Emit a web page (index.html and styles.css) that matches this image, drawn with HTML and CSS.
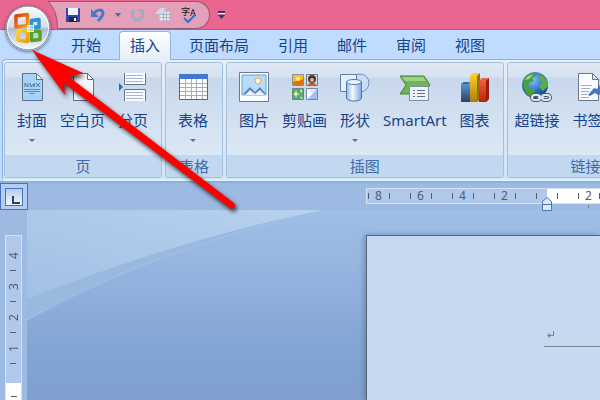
FILE: index.html
```
<!DOCTYPE html>
<html lang="zh-CN">
<head>
    <meta charset="UTF-8">
    <meta name="viewport" content="width=device-width, initial-scale=1.0">
    <title>Word - 插入</title>
    <link rel="stylesheet" href="styles.css">
</head>
<body>
    <header class="title-bar">
        <button class="office-button" aria-label="Office 按钮">
            <svg width="46" height="46" viewBox="0 0 46 46">
                <defs>
                    <linearGradient id="orb" x1="0" y1="0" x2="0" y2="1">
                        <stop offset="0" stop-color="#fafbfd"/>
                        <stop offset=".48" stop-color="#d5dbe8"/>
                        <stop offset=".52" stop-color="#aebbd2"/>
                        <stop offset="1" stop-color="#f6fcff"/>
                    </linearGradient>
                    <linearGradient id="orange" x1="0" y1="0" x2="1" y2="1">
                        <stop offset="0" stop-color="#d8400c"/>
                        <stop offset="1" stop-color="#f9a21c"/>
                    </linearGradient>
                    <linearGradient id="yellow" x1="0" y1="0" x2="1" y2="1">
                        <stop offset="0" stop-color="#fcd62c"/>
                        <stop offset="1" stop-color="#ee9a08"/>
                    </linearGradient>
                </defs>
                <circle cx="23" cy="23" r="22" fill="url(#orb)" stroke="#7c8494"/>
                <circle cx="23" cy="23" r="20.500" fill="none" stroke="#fff" stroke-opacity=".8"/>
                <g fill="none" stroke-linejoin="round" stroke-width="3.500">
                    <path d="M11 11l11.500-1.500v11L11 22z" stroke="url(#orange)"/>
                    <path d="M26.500 15.500l7.500-1v8l-7.500-1z" stroke="#2b96d2"/>
                    <path d="M13 26l9.500-.5v11L13 35z" stroke="url(#yellow)"/>
                    <path d="M26.500 26l8.500.5v8l-8.500 1z" stroke="#54a22c"/>
                </g>
                <path d="M22.500 20.500h6v6h-6z" fill="#fff" fill-opacity=".5" stroke="#fff" stroke-opacity=".8"/>
            </svg>
        </button>
        <div class="quick-access">
            <svg class="quick-cap" width="10" height="28" viewBox="0 0 10 28">
                <path d="M0 .5Q9.500 9 9.500 27.500H10V.5z" fill="#e2a0b9"/>
                <path d="M10 .5H0Q9.500 9 9.500 27.500H10" fill="none" stroke="#96566e"/>
            </svg>
            <div class="quick-tools">
                <button aria-label="保存">
                    <svg width="16" height="16" viewBox="0 0 16 16">
                        <path d="M1 1h13l1 1v13H1z" fill="#3a44a4"/>
                        <path d="M3 1h10v7H3z" fill="#eef4fc"/>
                        <path d="M4 10h8v5H4z" fill="#20264e"/>
                        <path d="M9 11h2v3H9z" fill="#fff"/>
                    </svg>
                </button>
                <button aria-label="撤消">
                    <svg width="16" height="16" viewBox="0 0 16 16">
                        <path d="M4 7C6 2 13 2 13 6c0 3-2 5-5 8" fill="none" stroke="#4a78cc" stroke-width="3"/>
                        <path d="M1 2v8h8z" fill="#4a78cc"/>
                    </svg>
                </button>
                <button aria-label="撤消选项">
                    <svg width="6" height="4" viewBox="0 0 6 4"><path d="M0 0h6L3 4z" fill="#3a6cb0"/></svg>
                </button>
                <button aria-label="重复">
                    <svg width="16" height="16" viewBox="0 0 16 16">
                        <path d="M4 3C1 6 2 13 7 13s7-5 4-9" fill="none" stroke="#a9a8c4" stroke-width="3"/>
                        <path d="M7 2h7v7z" fill="#a9a8c4"/>
                    </svg>
                </button>
                <button aria-label="插入表格">
                    <svg width="16" height="16" viewBox="0 0 16 16">
                        <path d="M4 4h11v10H4z" fill="#e8e6f0" stroke="#b0b0c8"/>
                        <path d="M4 7.500h11M4 10.500h11M8.500 4v10M11.500 4v10" stroke="#b0b0c8"/>
                        <path d="M0 7l5-6h6L7 7z" fill="#cfd6e4"/>
                    </svg>
                </button>
                <button aria-label="拼写和语法">
                    <svg width="18" height="18" viewBox="0 0 18 18">
                        <text class="icon-text" x="1" y="9">字</text>
                        <text class="icon-text" x="10" y="10">A</text>
                        <path d="M4 12l4 4 7-7" fill="none" stroke="#3a70c8" stroke-width="2"/>
                    </svg>
                </button>
            </div>
        </div>
        <button class="customize" aria-label="自定义快速访问工具栏">
            <svg width="7" height="8" viewBox="0 0 7 8">
                <path d="M0 0h7v2H0zM0 4h7L3.500 8z" fill="#26406e"/>
                <path d="M0 2h7v1H0z" fill="#fff"/>
            </svg>
        </button>
    </header>

    <nav class="tabs" role="tablist">
        <button role="tab">开始</button>
        <button role="tab" class="active" aria-selected="true">插入</button>
        <button role="tab">页面布局</button>
        <button role="tab">引用</button>
        <button role="tab">邮件</button>
        <button role="tab">审阅</button>
        <button role="tab">视图</button>
    </nav>

    <section class="ribbon">
        <div class="group">
            <div class="tools">
                <button class="tool">
                    <svg width="32" height="32" viewBox="0 0 32 32">
                        <path d="M6.500 2.500h14l6 6v21h-20z" fill="#a6d4f8" stroke="#5d708c"/>
                        <path d="M20.500 2.500v6h6z" fill="#f4faff" stroke="#5d708c"/>
                        <path d="M9 16v-4l3 4v-4M14 12l1 4 2-3 1 3 1-4M20 16l4-4M20 12l4 4" fill="none" stroke="#587a9e"/>
                        <path d="M8 18.500h16M8 20.500h16M13 22.500h6" stroke="#7b8692"/>
                    </svg>
                    <span>封面</span>
                    <i class="drop"></i>
                </button>
                <button class="tool">
                    <svg width="32" height="32" viewBox="0 0 32 32">
                        <path d="M6.500 2.500h14l6 6v21h-20z" fill="#f4f7fc" stroke="#5d6f8c"/>
                        <path d="M20.500 2.500v6h6z" fill="#fff" stroke="#5d6f8c"/>
                    </svg>
                    <span>空白页</span>
                </button>
                <button class="tool">
                    <svg width="32" height="32" viewBox="0 0 32 32">
                        <path d="M7.500 2v11.500h21V2M7.500 30V18.500h21V30" fill="#fbfcff" stroke="#66768f"/>
                        <path d="M9 4.500h17M9 7.500h17M9 10.500h17M9 21.500h17M9 24.500h17M9 27.500h17" stroke="#a5b6d2"/>
                        <path d="M2 12l4 4-4 4z" fill="#3569bd"/>
                    </svg>
                    <span>分页</span>
                </button>
            </div>
            <div class="group-name">页</div>
        </div>
        <div class="group">
            <div class="tools">
                <button class="tool">
                    <svg width="32" height="32" viewBox="0 0 32 32">
                        <path d="M2.500 3.500h28v25h-28z" fill="#fff" stroke="#586580"/>
                        <path d="M2 3h29v5H2z" fill="#4277d4"/>
                        <path d="M3 12.500h27M3 16.500h27M3 20.500h27M3 24.500h27M8.500 8v20M14.500 8v20M19.500 8v20M25.500 8v20" stroke="#a4aec2"/>
                    </svg>
                    <span>表格</span>
                    <i class="drop"></i>
                </button>
            </div>
            <div class="group-name">表格</div>
        </div>
        <div class="group">
            <div class="tools">
                <button class="tool">
                    <svg width="32" height="32" viewBox="0 0 32 32">
                        <path d="M1.500 1.500h29v29h-29z" fill="#fcfdff" stroke="#6a7b8f"/>
                        <path d="M4 4h24v20H4z" fill="#b7dcfa" stroke="#6f9fd0"/>
                        <circle cx="20" cy="10" r="3" fill="#fff4d8" stroke="#f0a25c"/>
                        <path d="M5 23l7-7 5 5 5-5 6 7z" fill="#5d80b8"/>
                        <path d="M7 24l5-5 5 4 5-4 5 5z" fill="#e6f1fc"/>
                    </svg>
                    <span>图片</span>
                </button>
                <button class="tool">
                    <svg width="32" height="32" viewBox="0 0 32 32">
                        <path d="M3.500 3.500h11v11h-11z" fill="#fbbe24" stroke="#82909e"/>
                        <path d="M4 11c4-2 7-1 10-3v6H4z" fill="#e26e0c"/>
                        <circle cx="9" cy="8" r="2" fill="#fff19a"/>
                        <path d="M17.500 3.500h11v11h-11z" fill="#dce0e4" stroke="#6f7680"/>
                        <circle cx="23" cy="8" r="4" fill="#3c3a3e"/>
                        <circle cx="23" cy="9" r="2" fill="#f3ad7c"/>
                        <path d="M19 14c0-3 8-3 8 0z" fill="#d9572c"/>
                        <path d="M3.500 17.500h11v11h-11z" fill="#57a878" stroke="#628b78"/>
                        <path d="M7 19l1 3 3 1-3 1-1 3-1-3-2-1 2-1zM12 18l1 2v2l-2-2zM11 24l1 2 2 1-2 1z" fill="#fdf3a6"/>
                        <path d="M17.500 17.500h11v11h-11z" fill="#dfe9fd" stroke="#7486a6"/>
                        <path d="M18 18l6 5-6 5z" fill="#fff"/>
                        <path d="M28 18v10h-9z" fill="#a2bcf0"/>
                    </svg>
                    <span>剪贴画</span>
                </button>
                <button class="tool">
                    <svg width="32" height="32" viewBox="0 0 32 32">
                        <defs>
                            <linearGradient id="can">
                                <stop offset="0" stop-color="#8fb7e6"/>
                                <stop offset=".4" stop-color="#f5faff"/>
                                <stop offset="1" stop-color="#7da7dc"/>
                            </linearGradient>
                        </defs>
                        <circle cx="21" cy="12" r="9" fill="#c9dff6" stroke="#6c8fbe"/>
                        <path d="M1.500 3.500h16v17h-16z" fill="#e4effb" stroke="#5f80ad"/>
                        <path d="M7.500 11v16c0 4 15 4 15 0V11z" fill="url(#can)" stroke="#5379ac"/>
                        <ellipse cx="15" cy="11" rx="7.500" ry="2.500" fill="#eaf4fe" stroke="#5379ac"/>
                    </svg>
                    <span>形状</span>
                    <i class="drop"></i>
                </button>
                <button class="tool">
                    <svg width="32" height="32" viewBox="0 0 32 32">
                        <path d="M1 5h24l6 9-6 9H1l6-9z" fill="#6fb556" stroke="#48823a"/>
                        <path d="M3 6h21l3 4H6z" fill="#9dd184"/>
                        <path d="M10.500 15.500h19v14h-19z" fill="#eef3fa" stroke="#7d8da2"/>
                        <path d="M14 19.500h2M18 19.500h8M14 22.500h2M18 22.500h8M14 25.500h2M18 25.500h8" stroke="#60738c"/>
                    </svg>
                    <span>SmartArt</span>
                </button>
                <button class="tool">
                    <svg width="32" height="32" viewBox="0 0 32 32">
                        <defs>
                            <linearGradient id="barBlue" x1="0" y1="0" x2="0" y2="1">
                                <stop offset="0" stop-color="#5b9cdd"/>
                                <stop offset="1" stop-color="#284467"/>
                            </linearGradient>
                            <linearGradient id="barGold" x1="0" y1="0" x2="0" y2="1">
                                <stop offset="0" stop-color="#fbd628"/>
                                <stop offset="1" stop-color="#b07c0a"/>
                            </linearGradient>
                            <linearGradient id="barRed" x1="0" y1="0" x2="0" y2="1">
                                <stop offset="0" stop-color="#f2654a"/>
                                <stop offset="1" stop-color="#b82404"/>
                            </linearGradient>
                        </defs>
                        <path d="M2 13l3-2h6v20H2z" fill="url(#barBlue)"/>
                        <path d="M2 13l3-2h6l-2 2z" fill="#2c6cae"/>
                        <path d="M11 5l3-3h7v26l-3 3h-7z" fill="url(#barGold)"/>
                        <path d="M18 5l3-3v26l-3 3z" fill="#93700c"/>
                        <path d="M20 10l3-3h7v21l-3 3h-7z" fill="url(#barRed)"/>
                        <path d="M27 10l3-3v21l-3 3z" fill="#98200a"/>
                    </svg>
                    <span>图表</span>
                </button>
            </div>
            <div class="group-name">插图</div>
        </div>
        <div class="group links">
            <div class="tools">
                <button class="tool">
                    <svg width="32" height="32" viewBox="0 0 32 32">
                        <defs>
                            <radialGradient id="globe" cx=".4" cy=".3" r=".7">
                                <stop offset="0" stop-color="#8fc8f6"/>
                                <stop offset=".6" stop-color="#2c72cc"/>
                                <stop offset="1" stop-color="#12458f"/>
                            </radialGradient>
                        </defs>
                        <circle cx="14" cy="14" r="13" fill="url(#globe)"/>
                        <path d="M3 8c3-5 8-6 13-6l-1 3-4 2 2 3-5 2-1 4 6 2 1 4-4 4C5 24 1 18 3 8z" fill="#4a9e3e"/>
                        <path d="M19 3c5 3 8 7 8 12l-5 5-4-4 3-5-3-3z" fill="#5cad48"/>
                        <path d="M4 9c2-4 5-5 8-5l-4 4z" fill="#a5da72"/>
                        <g fill="none" stroke="#4f5c6e" stroke-width="4">
                            <rect x="11" y="24" width="8" height="5" rx="2.500"/>
                            <rect x="21" y="24" width="8" height="5" rx="2.500"/>
                        </g>
                        <g fill="none" stroke="#dde5ee" stroke-width="2">
                            <rect x="11" y="24" width="8" height="5" rx="2.500"/>
                            <rect x="21" y="24" width="8" height="5" rx="2.500"/>
                            <path d="M17 26.500h6"/>
                        </g>
                    </svg>
                    <span>超链接</span>
                </button>
                <button class="tool">
                    <svg width="32" height="32" viewBox="0 0 32 32">
                        <path d="M6.500 2.500h14l6 6v21h-20z" fill="#fbfcff" stroke="#66758d"/>
                        <path d="M20.500 2.500v6h6z" fill="#e1e9f4" stroke="#66758d"/>
                        <path d="M9 14.500h11M9 17.500h9M9 20.500h8M9 23.500h6M9 26.500h8" stroke="#9aabc6"/>
                        <path d="M16 24l6-7 3 1 3-4 4 2v6l-6 2-3-2-5 3z" fill="#4778c6"/>
                    </svg>
                    <span>书签</span>
                </button>
            </div>
            <div class="group-name">链接</div>
        </div>
    </section>

    <main class="workspace">
        <button class="tab-selector" aria-label="左对齐式制表符"><i></i></button>
        <div class="ruler">
            <div class="ruler-margin">
                <span>8</span><span></span><span>6</span><span></span><span>4</span><span></span><span>2</span><span></span><span class="last"></span>
            </div>
            <div class="ruler-text">
                <span></span><span>2</span><span class="last"></span>
                <svg class="indent" width="10" height="15" viewBox="0 0 10 15">
                    <path d="M.5 14.500v-9L5 1.500l4.500 4v9z" fill="#dfe9f5" stroke="#4a74ae"/>
                    <path d="M0 8.500h10" stroke="#4a74ae"/>
                </svg>
                <i class="default-tab"></i>
            </div>
        </div>
        <div class="side">
            <div class="side-ruler">
                <div class="side-margin">
                    <span>4</span><span>3</span><span>2</span><span>1</span>
                </div>
                <div class="side-text"></div>
            </div>
        </div>
        <div class="canvas">
            <svg class="sweep" width="320" height="120" viewBox="0 0 320 120">
                <defs>
                    <linearGradient id="sky" x1="0" y1="1" x2="1" y2="0">
                        <stop offset="0" stop-color="#a2c0e6"/>
                        <stop offset="1" stop-color="#b8d1ee"/>
                    </linearGradient>
                </defs>
                <path d="M0 110Q130 38 295 0H0z" fill="#9ab9df"/>
                <path d="M0 110Q130 38 295 0" fill="none" stroke="#a5c1e6"/>
                <path d="M0 89Q150 30 295 0H0z" fill="url(#sky)"/>
            </svg>
            <div class="page">
                <div class="page-header">
                    <svg width="8" height="8" viewBox="0 0 8 8">
                        <path d="M6.500 0v4.500H2" fill="none" stroke="#7d838b"/>
                        <path d="M0 4.500L3 2v5z" fill="#7d838b"/>
                    </svg>
                </div>
            </div>
        </div>
    </main>

    <svg class="pointer" width="260" height="230" viewBox="0 0 260 230">
        <path d="M32 50L83 73 69 77 234 203Q237 207 231 209L64 83 65 95z" fill="#f00"/>
    </svg>
</body>
</html>
```

FILE: styles.css
```
* {
    box-sizing: border-box;
}
body {
    display: flex;
    flex-direction: column;
    min-height: 100vh;
    margin: 0;
    overflow: hidden;
    background-color: #bfdbff;
    color: #15428b;
    font-family: "Noto Sans", "Noto Sans CJK SC", sans-serif;
    font-size: 15px;
    line-height: 20px;
}
button {
    padding: 0;
    border: 1px solid transparent;
    background: none;
    color: inherit;
    font: inherit;
    white-space: nowrap;
}
svg {
    display: block;
    flex: none;
}

/* title bar */
.title-bar {
    position: relative;
    display: flex;
    align-items: center;
    height: 30px;
    padding-left: 48px;
    border-bottom: 1px solid #c0587e;
    background-color: #e8668f;
}
.office-button {
    position: absolute;
    left: 5px;
    top: 5px;
    border: none;
    border-radius: 50%;
    box-shadow: 0 1px 3px rgba(30, 40, 70, 0.6);
}
.quick-access {
    display: flex;
}
.quick-tools {
    display: flex;
    align-items: center;
    gap: 7px;
    height: 28px;
    padding: 0 10px 0 6px;
    border: 1px solid #96566e;
    border-left: none;
    border-radius: 0 14px 14px 0;
    background-color: #e2a0b9;
}
.icon-text {
    fill: #111;
    font-size: 9px;
}
.customize {
    margin-left: 7px;
}

/* tabs */
.tabs {
    display: flex;
    gap: 7px;
    height: 29px;
    padding: 1px 0 0 60px;
}
.tabs button {
    padding: 0 10px 2px;
    border-bottom: none;
    border-radius: 4px 4px 0 0;
}
.tabs .active {
    position: relative;
    height: 29px;
    border-color: #8fb5e6;
    background: linear-gradient(#fdfeff, #e6eef8);
}

/* ribbon */
.ribbon {
    display: flex;
    gap: 3px;
    height: 122px;
    margin-left: 2px;
    padding: 2px 0 1px 1px;
    overflow: hidden;
    border: 1px solid #8db2e3;
    border-right: none;
    border-bottom: 2px solid #d3f7fd;
    border-radius: 4px 0 0 4px;
    background: linear-gradient(#e6eef8, #d3e4f6);
}
.group {
    display: flex;
    flex: none;
    flex-direction: column;
    min-width: 58px;
    border: 1px solid #a3c1dd;
    border-radius: 3px;
    background: linear-gradient(#dfe8f4 0, #d6e2f1 14px, #c8d8ec 15px, #dbe8f5 92px);
}
.links {
    min-width: 158px;
}
.tools {
    display: flex;
    flex: 1;
    gap: 1px;
    padding: 7px 7px 0 6px;
}
.links .tools {
    padding-left: 1px;
}
.tool {
    display: flex;
    flex-direction: column;
    align-items: center;
    padding: 0 5px;
}
.tool svg {
    margin: 0 -1px;
}
.tool span {
    margin-top: 7px;
}
.drop {
    margin-top: 9px;
    border: 3px solid transparent;
    border-top-color: #4f75ad;
    border-bottom: none;
}
.group-name {
    height: 22px;
    border-radius: 0 0 2px 2px;
    background-color: #c1d8f0;
    color: #3e6aaa;
    line-height: 22px;
    text-align: center;
}

/* document area */
.workspace {
    display: grid;
    flex: 1;
    grid-template-columns: 27px 1fr;
    grid-template-rows: 27px 1fr;
    border-top: 2px solid #91aedb;
    background-color: #9cbae2;
    color: #555c68;
    font-size: 12px;
}
.tab-selector {
    width: 28px;
    height: 27px;
    padding: 4px;
    border-color: #4472c4;
    background-color: #b5cdee;
}
.tab-selector i {
    display: block;
    width: 18px;
    height: 18px;
    border: 1px solid #4472c4;
    background: linear-gradient(#b4ccec, #f4f8fd);
}
.tab-selector i::after {
    content: "";
    display: block;
    width: 6px;
    height: 6px;
    margin: 7px 0 0 6px;
    border: solid #29456f;
    border-width: 0 0 2px 2px;
}
.ruler {
    position: relative;
    z-index: 1;
    display: flex;
    align-self: start;
    height: 16px;
    margin: 5px 0 0 339px;
    border: 1px solid #d5e2f5;
    border-right: none;
    line-height: 14px;
}
.ruler-margin {
    display: flex;
    width: 180px;
    padding-left: 1px;
    background-color: #b0c8ea;
}
.ruler-text {
    position: relative;
    display: flex;
    flex: 1;
    padding-left: 10px;
    background-color: #fff;
}
.ruler span {
    flex: none;
    width: 21px;
    background: linear-gradient(#555c68, #555c68) left center / 1px 6px no-repeat;
    text-align: center;
}
.ruler .last {
    width: 1px;
}
.indent {
    position: absolute;
    left: -5px;
    top: 7px;
}
.default-tab {
    position: absolute;
    left: 41px;
    top: 16px;
    width: 1px;
    height: 3px;
    background-color: #7d838b;
}
.side {
    display: flex;
    padding: 25px 5px 0;
}
.side-ruler {
    display: flex;
    flex: 1;
    flex-direction: column;
    border: 1px solid #d5e2f5;
    border-bottom: none;
}
.side-margin {
    display: flex;
    flex-direction: column;
    height: 147px;
    padding-top: 4px;
    background-color: #b0c8ea;
}
.side-margin span {
    width: 15px;
    height: 31px;
    background: linear-gradient(#555c68, #555c68) center top / 6px 1px no-repeat;
    line-height: 15px;
    text-align: center;
    transform: rotate(180deg);
    writing-mode: vertical-rl;
}
.side-text {
    flex: 1;
    background: linear-gradient(#555c68, #555c68) center 13px / 6px 1px no-repeat #fff;
}
.canvas {
    position: relative;
    display: flex;
    padding: 25px 0 0 339px;
    background: linear-gradient(#a0bfe6, #92b1dd 40%, #84a6d4 70%, #7fa0cf);
}
.sweep {
    position: absolute;
    left: 0;
    top: 0;
}
.page {
    position: relative;
    flex: 1;
    padding: 95px 0 0 177px;
    border: 1px solid #5d646e;
    border-right: none;
    border-bottom: none;
    background-color: #c7d9f1;
    box-shadow: -2px 0 5px rgba(50, 80, 130, 0.4);
}
.page-header {
    height: 16px;
    padding-left: 3px;
    border-bottom: 1px solid #7d838b;
}

.pointer {
    position: absolute;
    left: 0;
    top: 0;
    filter: drop-shadow(2px 3px 2px rgba(0, 0, 0, 0.7));
    pointer-events: none;
}
```
